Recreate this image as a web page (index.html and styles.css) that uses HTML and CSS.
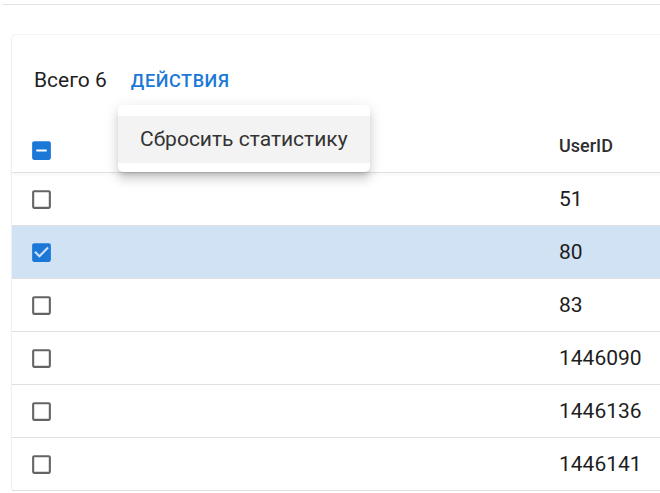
FILE: index.html
```
<!DOCTYPE html>
<html lang="ru">
<head>
    <meta charset="UTF-8">
    <meta name="viewport" content="width=device-width, initial-scale=1.0">
    <title>Пользователи</title>
    <link rel="stylesheet" href="styles.css">
</head>
<body>
    <div class="topbar"></div>

    <div class="card">
        <div class="toolbar">
            <span class="total">Всего 6</span>
            <button class="actions">Действия</button>
        </div>

        <div class="grid">
            <div class="row head">
                <div class="cell check">
                    <svg class="box on" viewBox="0 0 24 24"><path d="M19 3H5c-1.1 0-2 .9-2 2v14c0 1.1.9 2 2 2h14c1.1 0 2-.9 2-2V5c0-1.1-.9-2-2-2zm-2 10H7v-2h10v2z"/></svg>
                </div>
                <div class="cell id">UserID</div>
            </div>
            <div class="row">
                <div class="cell check"><svg class="box" viewBox="0 0 24 24"><path d="M19 5v14H5V5h14m0-2H5c-1.11 0-2 .9-2 2v14c0 1.1.89 2 2 2h14c1.1 0 2-.9 2-2V5c0-1.1-.9-2-2-2z"/></svg></div>
                <div class="cell id">51</div>
            </div>
            <div class="row selected">
                <div class="cell check"><svg class="box on" viewBox="0 0 24 24"><path d="M19 3H5c-1.11 0-2 .9-2 2v14c0 1.1.89 2 2 2h14c1.1 0 2-.9 2-2V5c0-1.1-.9-2-2-2zm-9 14l-5-5 1.41-1.41L10 14.17l7.59-7.59L19 8l-9 9z"/></svg></div>
                <div class="cell id">80</div>
            </div>
            <div class="row">
                <div class="cell check"><svg class="box" viewBox="0 0 24 24"><path d="M19 5v14H5V5h14m0-2H5c-1.11 0-2 .9-2 2v14c0 1.1.89 2 2 2h14c1.1 0 2-.9 2-2V5c0-1.1-.9-2-2-2z"/></svg></div>
                <div class="cell id">83</div>
            </div>
            <div class="row">
                <div class="cell check"><svg class="box" viewBox="0 0 24 24"><path d="M19 5v14H5V5h14m0-2H5c-1.11 0-2 .9-2 2v14c0 1.1.89 2 2 2h14c1.1 0 2-.9 2-2V5c0-1.1-.9-2-2-2z"/></svg></div>
                <div class="cell id">1446090</div>
            </div>
            <div class="row">
                <div class="cell check"><svg class="box" viewBox="0 0 24 24"><path d="M19 5v14H5V5h14m0-2H5c-1.11 0-2 .9-2 2v14c0 1.1.89 2 2 2h14c1.1 0 2-.9 2-2V5c0-1.1-.9-2-2-2z"/></svg></div>
                <div class="cell id">1446136</div>
            </div>
            <div class="row">
                <div class="cell check"><svg class="box" viewBox="0 0 24 24"><path d="M19 5v14H5V5h14m0-2H5c-1.11 0-2 .9-2 2v14c0 1.1.89 2 2 2h14c1.1 0 2-.9 2-2V5c0-1.1-.9-2-2-2z"/></svg></div>
                <div class="cell id">1446141</div>
            </div>
        </div>

        <!-- меню кнопки "Действия" -->
        <div class="menu">
            <div class="menu-item">Сбросить статистику</div>
        </div>
    </div>
</body>
</html>
```

FILE: styles.css
```
body {
    margin: 0;
    font-family: Roboto, "Noto Sans", sans-serif;
    color: #222;
    background: #fff;
    overflow: hidden;
}
.topbar {
    height: 4px;
    margin-left: 2px;
    border-bottom: 1px solid #e3e3e3;
}
.card {
    position: relative;
    width: 720px;
    margin: 30px 0 0 12px;
    border-radius: 4px;
    background: #fff;
    box-shadow: 0 0 2px rgba(0, 0, 0, 0.14), 0 1px 3px rgba(0, 0, 0, 0.06);
}
.toolbar {
    display: flex;
    align-items: center;
    gap: 24px;
    height: 26px;
    padding: 32px 22px 23px;
}
.total {
    font-size: 21px;
    color: #1f1f1f;
}
.actions {
    border: none;
    background: none;
    padding: 0;
    font-family: inherit;
    font-size: 18px;
    font-weight: 500;
    letter-spacing: 0.6px;
    text-transform: uppercase;
    color: #1b78d6;
}
.row {
    display: flex;
    align-items: center;
    box-sizing: border-box;
    height: 53px;
    border-bottom: 1px solid #e0e0e0;
}
.row.head {
    height: 57px;
    box-shadow: 0 2px 3px rgba(0, 0, 0, 0.03);
}
.row.selected {
    background: #d0e2f4;
}
.cell {
    font-size: 21px;
    color: #1d1d1d;
}
.cell.check {
    width: 530px;
    padding-left: 17px;
    display: flex;
}
.head .cell.check {
    padding-top: 12px;
}
.head .cell.id {
    padding-top: 3px;
    font-size: 18px;
    font-weight: 500;
    color: #2e2e2e;
}
.box {
    width: 25px;
    height: 25px;
    fill: #646464;
}
.box.on {
    fill: #1b78d6;
}
.menu {
    position: absolute;
    left: 106px;
    top: 70px;
    width: 252px;
    padding: 11px 0 9px;
    border-radius: 5px;
    background: #fff;
    box-shadow: 0 5px 5px -3px rgba(0, 0, 0, 0.16), 0 8px 10px 1px rgba(0, 0, 0, 0.1), 0 3px 14px 2px rgba(0, 0, 0, 0.08);
}
.menu-item {
    height: 47px;
    line-height: 46px;
    padding-left: 22px;
    font-size: 21px;
    color: #333;
    background: #f3f3f3;
}
```
